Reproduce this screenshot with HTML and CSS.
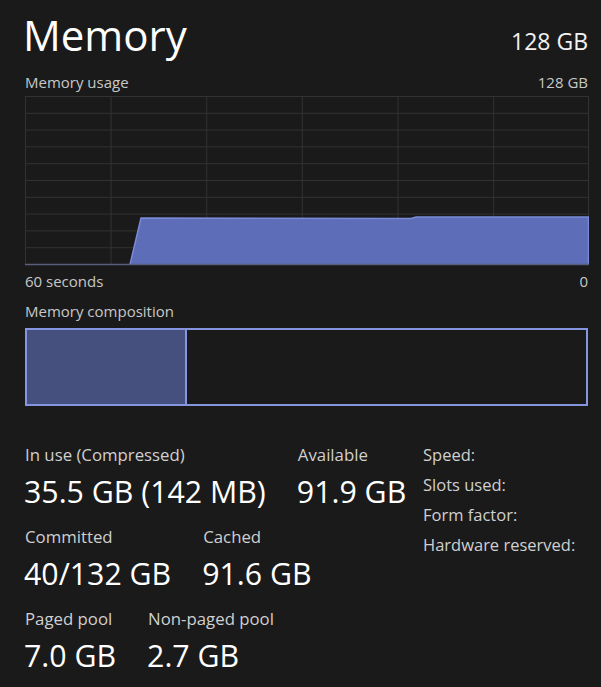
FILE: index.html
```html
<!DOCTYPE html>
<html>
<head>
<meta charset="utf-8">
<link rel="stylesheet" href="styles.css">
</head>
<body>
<div class="page">
  <div class="header">
    <div class="title">Memory</div>
    <div class="total">128 GB</div>
  </div>
  <div class="caption-row top">
    <span>Memory usage</span>
    <span>128 GB</span>
  </div>
  <svg class="chart" width="564" height="170" viewBox="0 0 564 170">
    <g stroke="#323232" stroke-width="1">
      <line x1="0" y1="0.5" x2="564" y2="0.5"/>
      <line x1="0" y1="17.3" x2="564" y2="17.3"/>
      <line x1="0" y1="34.1" x2="564" y2="34.1"/>
      <line x1="0" y1="50.9" x2="564" y2="50.9"/>
      <line x1="0" y1="67.7" x2="564" y2="67.7"/>
      <line x1="0" y1="84.5" x2="564" y2="84.5"/>
      <line x1="0" y1="101.3" x2="564" y2="101.3"/>
      <line x1="0" y1="118.1" x2="564" y2="118.1"/>
      <line x1="0" y1="134.9" x2="564" y2="134.9"/>
      <line x1="0" y1="151.7" x2="564" y2="151.7"/>
      <line x1="0.5" y1="0" x2="0.5" y2="169"/>
      <line x1="86" y1="0" x2="86" y2="169"/>
      <line x1="181.7" y1="0" x2="181.7" y2="169"/>
      <line x1="277.3" y1="0" x2="277.3" y2="169"/>
      <line x1="373" y1="0" x2="373" y2="169"/>
      <line x1="468.7" y1="0" x2="468.7" y2="169"/>
      <line x1="563.5" y1="0" x2="563.5" y2="169"/>
    </g>
    <polygon points="105,168.5 116,122 386,122.5 391,121 563.5,121 563.5,168.5" fill="#5d6db8"/>
    <polyline points="105,168.5 116,122 386,122.5 391,121 563.5,121 563.5,168.5" fill="none" stroke="#7a8ad8" stroke-width="1.5"/>
    <line x1="0" y1="168.5" x2="564" y2="168.5" stroke="#5a5e7e" stroke-width="1.5"/>
  </svg>
  <div class="caption-row axis">
    <span>60 seconds</span>
    <span>0</span>
  </div>
  <div class="caption-row comp-label">
    <span>Memory composition</span>
  </div>
  <div class="composition">
    <div class="comp-used"></div>
    <div class="comp-free"></div>
  </div>
  <div class="stats">
    <div class="stat-rows">
      <div class="stat-row">
        <div class="stat">
          <div class="label">In use (Compressed)</div>
          <div class="value">35.5 GB (142 MB)</div>
        </div>
        <div class="stat">
          <div class="label">Available</div>
          <div class="value">91.9 GB</div>
        </div>
      </div>
      <div class="stat-row">
        <div class="stat">
          <div class="label">Committed</div>
          <div class="value">40/132 GB</div>
        </div>
        <div class="stat">
          <div class="label">Cached</div>
          <div class="value">91.6 GB</div>
        </div>
      </div>
      <div class="stat-row">
        <div class="stat">
          <div class="label">Paged pool</div>
          <div class="value">7.0 GB</div>
        </div>
        <div class="stat">
          <div class="label">Non-paged pool</div>
          <div class="value">2.7 GB</div>
        </div>
      </div>
    </div>
    <div class="specs">
      <div class="spec">Speed:</div>
      <div class="spec">Slots used:</div>
      <div class="spec">Form factor:</div>
      <div class="spec">Hardware reserved:</div>
    </div>
  </div>
</div>
</body>
</html>
```

FILE: styles.css
```css
html, body {
  margin: 0;
  padding: 0;
  background: #1a1a1a;
}
body {
  font-family: "Open Sans", "Noto Sans", sans-serif;
  color: #ffffff;
  width: 601px;
  height: 687px;
  overflow: hidden;
}
.page {
  padding: 0 13px 0 25px;
  display: flex;
  flex-direction: column;
}
.header {
  display: flex;
  justify-content: space-between;
  align-items: flex-end;
  height: 62px;
}
.title {
  font-size: 42px;
  line-height: 42px;
  margin-left: -2px;
  padding-bottom: 6px;
  color: #ffffff;
}
.total {
  font-size: 23px;
  line-height: 24px;
  padding-bottom: 9px;
  color: #f2f2f2;
}
.caption-row {
  display: flex;
  justify-content: space-between;
  font-size: 15px;
  line-height: 20px;
  color: #c8c8c8;
}
.caption-row.top {
  height: 34px;
  padding-top: 10px;
  box-sizing: border-box;
}
.chart {
  display: block;
}
.caption-row.axis {
  padding-top: 5px;
  height: 30px;
  box-sizing: border-box;
}
.caption-row.comp-label {
  padding-top: 5px;
  height: 32px;
  box-sizing: border-box;
}
.composition {
  display: flex;
  height: 78px;
  border: 2px solid #8695e0;
  box-sizing: border-box;
}
.comp-used {
  width: 158px;
  background: #46507e;
  border-right: 2px solid #8695e0;
}
.comp-free {
  flex: 1;
}
.stats {
  display: flex;
  margin-top: 37px;
}
.stat-rows {
  width: 398px;
  display: flex;
  flex-direction: column;
  gap: 9px;
}
.stat-row {
  display: flex;
  gap: 32px;
}
.stat {
  display: flex;
  flex-direction: column;
}
.label {
  font-size: 16.8px;
  line-height: 24px;
  color: #d0d0d0;
}
.value {
  font-size: 30.3px;
  line-height: 49px;
  color: #ffffff;
  margin-left: -1px;
}
.specs {
  display: flex;
  flex-direction: column;
}
.spec {
  font-size: 16.5px;
  line-height: 30px;
  margin-top: -3px;
  margin-bottom: 3px;
  color: #d0d0d0;
}
```
